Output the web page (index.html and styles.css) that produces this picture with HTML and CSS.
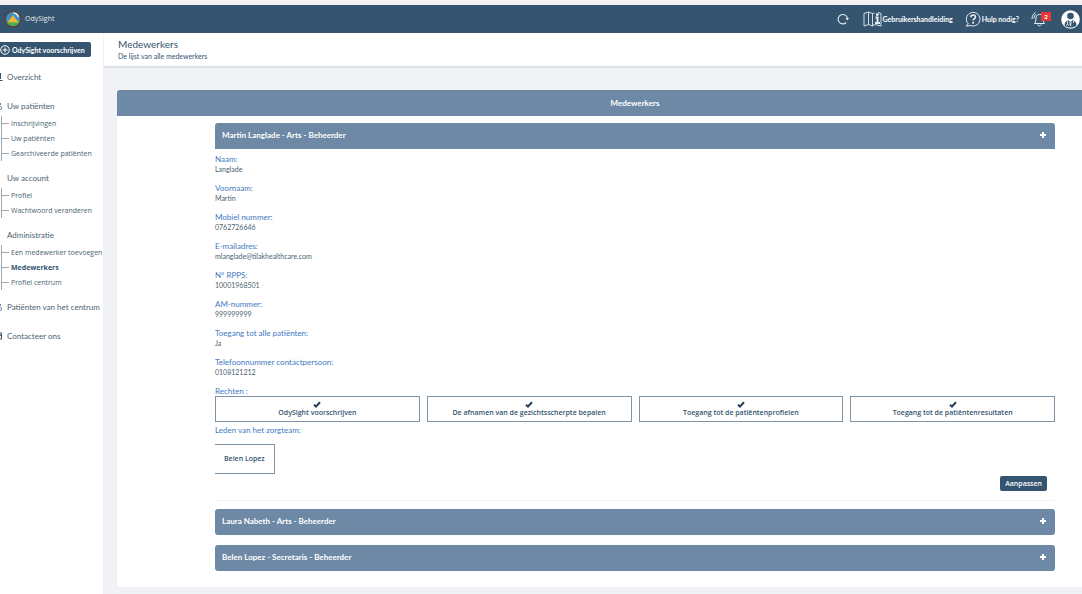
FILE: index.html
```html
<!DOCTYPE html>
<html lang="nl">
<head>
<meta charset="utf-8">
<title>OdySight - Medewerkers</title>
<link rel="stylesheet" href="styles.css">
</head>
<body>
<header class="topbar">
  <a class="brand" href="#">
    <svg class="brand-logo" viewBox="0 0 18 18" aria-hidden="true">
      <circle cx="9" cy="9" r="8.6" fill="#5d4037"/>
      <circle cx="9" cy="9" r="7" fill="#3f8fc4"/>
      <path d="M2.3 11h13.4A7 7 0 0 1 2.3 11z" fill="#4caf50"/>
      <path d="M3.6 12.2 9 5.2l5.4 7z" fill="#f7b531"/>
      <path d="M9.5 3a6 6 0 0 1 5 4" fill="none" stroke="#e6f1f6" stroke-width="1.4"/>
    </svg>
    <span>OdySight</span>
  </a>
  <nav class="tools" aria-label="Hulpmiddelen">
    <button class="tool tool-refresh" type="button" aria-label="Vernieuwen">
      <svg width="12" height="12" viewBox="0 0 12 12" fill="none" stroke="#dfe6ec" stroke-width="1.1"><path d="M9.200 9.500A4.700 4.700 0 1 1 10.500 5.500"/><path d="M8.300 5h3.700L10.400 7.500z" fill="#dfe6ec" stroke="none"/></svg>
    </button>
    <a class="tool tool-guide" href="#">
      <svg width="19" height="16" viewBox="0 0 19 16" fill="none" stroke="#e8edf1"><path d="M5.500 13.500 1 15V2.500L5.500 1l4 1.500v12.500l-4-1.500zM5.500 1v12.500M9.500 2.500l2-.5M9.500 15l2-1.500 6.500 1.500V2.500L15 1.500" stroke-width=".9"/><path d="M12.500 6.500h2v5M12 12h5" stroke-width="2"/><circle cx="14.300" cy="3.600" r="1.400" fill="#fff" stroke="none"/></svg>
      <span>Gebruikershandleiding</span>
    </a>
    <a class="tool tool-help" href="#">
      <svg width="16" height="16" viewBox="0 0 16 16" fill="none" stroke="#e8edf1"><path d="M3.400 13A6.800 6.800 0 1 1 6 14.600L1 15z"/><path d="M5.800 6.300c0-3 4.600-3 4.600-.3C10.400 7.600 8.100 7.700 8.100 9.600" stroke-width="1.600"/><circle cx="8.100" cy="11.700" r="1" fill="#fff" stroke="none"/></svg>
      <span>Hulp nodig?</span>
    </a>
    <button class="tool tool-alerts" type="button" aria-label="Meldingen">
      <svg width="16" height="16" viewBox="0 0 16 16" fill="none" stroke="#e8edf1"><path d="M3.500 12.500c1.500-1.500 1.200-3.500 1.500-5.500.3-2.500 1.700-3.600 3.500-3.600s3.200 1.100 3.500 3.600c.2 2 0 4 1.500 5.500zM6.600 13.500c.4 1.800 3.200 1.800 3.600 0M1 8C1 5 2 3 4.500 1.400M3 7.600c0-2 .8-3.400 2.200-4.400"/></svg>
      <span class="badge">2</span>
    </button>
    <button class="tool tool-user" type="button" aria-label="Gebruiker">
      <svg width="19" height="19" viewBox="0 0 19 19"><circle cx="9.500" cy="9.500" r="9.300" fill="#fff"/><circle cx="9.500" cy="6" r="3.300" fill="#34546f"/><path d="M3.500 15.500c0-3.500 2-5 4-5.300L9.500 12l2-1.800c2 .3 4 1.800 4 5.300-3 2.700-9 2.700-12 0z" fill="#34546f"/><path d="M6.500 11v2.500M12.500 11v2M5.500 15.500l1-2 1 2M8.800 12l.7 4 .7-4" fill="none" stroke="#fff" stroke-width=".8"/></svg>
    </button>
  </nav>
</header>

<div class="shell">
  <aside class="sidebar">
    <button class="prescribe" type="button">
      <svg width="10" height="10" viewBox="0 0 10 10" fill="none" stroke="#fff"><circle cx="5" cy="5" r="4.300"/><path d="M5 2.500v5M2.500 5h5"/></svg>
      <span>OdySight voorschrijven</span>
    </button>
    <nav class="menu" aria-label="Hoofdmenu">
      <section class="group">
        <a class="item" href="#"><svg class="edge" viewBox="0 0 3 10" aria-hidden="true"><path d="M.5 1v6M0 8.500h2.500" stroke="#34546f" fill="none"/></svg>Overzicht</a>
      </section>
      <section class="group">
        <a class="item" href="#"><svg class="edge" viewBox="0 0 3 10" aria-hidden="true"><path d="M0 2l1 1-1 1M0 5l1.500 1v2L0 8.500" stroke="#71889b" fill="none"/></svg>Uw patiënten</a>
        <ul class="sub">
          <li><a href="#">Inschrijvingen</a></li>
          <li><a href="#">Uw patiënten</a></li>
          <li><a href="#">Gearchiveerde patiënten</a></li>
        </ul>
      </section>
      <section class="group">
        <a class="item" href="#">Uw account</a>
        <ul class="sub">
          <li><a href="#">Profiel</a></li>
          <li><a href="#">Wachtwoord veranderen</a></li>
        </ul>
      </section>
      <section class="group">
        <a class="item" href="#">Administratie</a>
        <ul class="sub">
          <li><a href="#">Een medewerker toevoegen</a></li>
          <li><a class="current" href="#" aria-current="page">Medewerkers</a></li>
          <li><a href="#">Profiel centrum</a></li>
        </ul>
      </section>
      <section class="group">
        <a class="item" href="#"><svg class="edge" viewBox="0 0 3 10" aria-hidden="true"><path d="M0 2l1 1-1 1M0 5l1.500 1v2L0 8.500" stroke="#71889b" fill="none"/></svg>Patiënten van het centrum</a>
      </section>
      <section class="group">
        <a class="item" href="#"><svg class="edge" viewBox="0 0 3 10" aria-hidden="true"><path d="M0 2h1.500v6H0M0 5l1.500-2" stroke="#34546f" fill="none"/></svg>Contacteer ons</a>
      </section>
    </nav>
  </aside>

  <main class="main">
    <div class="page-head">
      <h1>Medewerkers</h1>
      <p>De lijst van alle medewerkers</p>
    </div>
    <section class="panel">
      <h2 class="panel-title">Medewerkers</h2>
      <div class="panel-body">
        <button class="bar bar-open" type="button" aria-expanded="true"><span>Martin Langlade - Arts - Beheerder</span><svg class="plus" viewBox="0 0 6 6"><path d="M3 0v6M0 3h6"/></svg></button>
        <div class="details">
          <dl class="fields">
            <div><dt>Naam:</dt><dd>Langlade</dd></div>
            <div><dt>Voornaam:</dt><dd>Martin</dd></div>
            <div><dt>Mobiel nummer:</dt><dd>0762726646</dd></div>
            <div><dt>E-mailadres:</dt><dd>mlanglade@tilakhealthcare.com</dd></div>
            <div><dt>N° RPPS:</dt><dd>10001968501</dd></div>
            <div><dt>AM-nummer:</dt><dd>999999999</dd></div>
            <div><dt>Toegang tot alle patiënten:</dt><dd>Ja</dd></div>
            <div><dt>Telefoonnummer contactpersoon:</dt><dd>0108121212</dd></div>
          </dl>
          <h3 class="label">Rechten :</h3>
          <ul class="rights">
            <li><svg class="check" viewBox="0 0 8 7"><path d="M1 3.700 3 5.500 7 1.300"/></svg>OdySight voorschrijven</li>
            <li><svg class="check" viewBox="0 0 8 7"><path d="M1 3.700 3 5.500 7 1.300"/></svg>De afnamen van de gezichtsscherpte bepalen</li>
            <li><svg class="check" viewBox="0 0 8 7"><path d="M1 3.700 3 5.500 7 1.300"/></svg>Toegang tot de patiëntenprofielen</li>
            <li><svg class="check" viewBox="0 0 8 7"><path d="M1 3.700 3 5.500 7 1.300"/></svg>Toegang tot de patiëntenresultaten</li>
          </ul>
          <h3 class="label">Leden van het zorgteam:</h3>
          <div class="member">Belen Lopez</div>
          <div class="actions"><button class="edit" type="button">Aanpassen</button></div>
        </div>
        <button class="bar" type="button" aria-expanded="false"><span>Laura Nabeth - Arts - Beheerder</span><svg class="plus" viewBox="0 0 6 6"><path d="M3 0v6M0 3h6"/></svg></button>
        <button class="bar" type="button" aria-expanded="false"><span>Belen Lopez - Secretaris - Beheerder</span><svg class="plus" viewBox="0 0 6 6"><path d="M3 0v6M0 3h6"/></svg></button>
      </div>
    </section>
  </main>
</div>
</body>
</html>
```

FILE: styles.css
```css
* { box-sizing: border-box; }

body {
  margin: 0;
  min-height: 100vh;
  display: flex;
  flex-direction: column;
  overflow-x: hidden;
  border-top: 5px solid #f2f2f2;
  background: #f0f2f6;
  color: #4a5f70;
  font: 7px/10px "Open Sans", sans-serif;
}

h1, h2, h3, p, ul, dl, dd { margin: 0; padding: 0; }
ul { list-style: none; }
a { color: inherit; text-decoration: none; }
button { border: 0; padding: 0; font: inherit; color: inherit; background: none; cursor: pointer; }
svg { display: block; flex: none; }

.topbar {
  display: flex;
  align-items: center;
  justify-content: space-between;
  height: 28px;
  padding: 0 2px 0 4px;
  background: #34546f;
  color: #fff;
}
.brand { display: flex; align-items: center; gap: 3px; color: #e3e9ee; }
.brand-logo { width: 18px; height: 18px; }
.tools { display: flex; align-items: center; gap: 12px; font-family: Lato, sans-serif; }
.tool { position: relative; display: flex; align-items: center; gap: 1px; font-weight: 700; }
.tool-alerts { margin-right: 2px; }
.badge {
  position: absolute;
  top: 1px;
  right: -4px;
  width: 10px;
  height: 9px;
  background: #e53935;
  font-size: 6px;
  line-height: 9px;
  text-align: center;
}
.tool-refresh { margin-right: 2px; }

.shell { display: flex; flex: 1; }
.sidebar { flex: none; width: 103px; padding-top: 9px; background: #fff; }
.prescribe {
  display: flex;
  align-items: center;
  gap: 2px;
  height: 15px;
  width: 91px;
  border-radius: 0 2px 2px 0;
  background: #34546f;
  color: #fff;
  font: 700 7px/10px Lato, sans-serif;
  white-space: nowrap;
}
.menu { display: flex; flex-direction: column; gap: 16px; padding-top: 14px; }
.item { position: relative; display: block; padding-left: 7px; font: 400 8px/13px Lato, sans-serif; white-space: nowrap; }
.edge { position: absolute; left: 0; top: 1px; width: 3px; height: 10px; }
.sub { margin: 3px 0 -5px 1px; border-left: 1px solid #9fa9b1; }
.sub a { display: flex; align-items: center; gap: 2px; height: 15px; white-space: nowrap; }
.sub a::before { content: ""; width: 7px; height: 1px; background: #9fa9b1; }
.sub .current { color: #34546f; font-weight: 700; }

.main { flex: 1; min-width: 0; padding-left: 1px; overflow: hidden; }
.page-head {
  height: 35px;
  padding: 4px 14px;
  border-bottom: 2px solid #dfe2e6;
  background: #fff;
  color: #34546f;
}
.page-head h1 { font: 400 10px/14px Lato, sans-serif; }
.page-head p { font: 400 7px/10px Lato, sans-serif; }

/* The panel runs past the right edge of the viewport. */
.panel { margin: 22px -71px 6px 13px; border-radius: 3px; background: #fff; }
.panel-title {
  border-radius: 3px 3px 0 0;
  background: #6e89a6;
  color: #fff;
  text-align: center;
  font: 700 8px/26px Lato, sans-serif;
}
.panel-body { display: flex; flex-direction: column; gap: 10px; padding: 7px 98px 16px; }
.bar {
  display: flex;
  align-items: center;
  justify-content: space-between;
  height: 26px;
  padding: 0 9px 2px 7px;
  border-radius: 3px;
  background: #6e89a6;
  color: #fff;
  font: 700 8px/12px Lato, sans-serif;
}
.bar-open { border-radius: 3px 3px 0 0; }
.plus { width: 6px; height: 6px; fill: none; stroke: #fff; stroke-width: 2; }
.details { margin: -5px 0 -2px; padding-bottom: 9px; border-bottom: 1px solid #f3f4f6; }
.fields div { height: 29px; }
dt, .label { color: #4179c4; font: 400 8px/10px Lato, sans-serif; }
dd { font: 400 7px/10px Lato, sans-serif; }
.rights { display: grid; grid-template-columns: repeat(4, 1fr); gap: 7px; padding-bottom: 3px; }
.rights li {
  height: 26px;
  padding-top: 4px;
  border: 1px solid #7e94a8;
  color: #34546f;
  font-weight: 600;
  text-align: center;
}
.check { width: 8px; height: 7px; margin: 0 auto; fill: none; stroke: #243f5c; stroke-width: 2; }
.member {
  width: fit-content;
  margin-top: 9px;
  padding: 9px;
  border: 1px solid #7e94a8;
  border-left: 0;
  color: #34546f;
  font-weight: 600;
}
.actions { display: flex; justify-content: flex-end; padding: 2px 8px 0 0; }
.edit { height: 15px; padding: 0 5px; border-radius: 2px; background: #34546f; color: #fff; font-weight: 600; }
```
